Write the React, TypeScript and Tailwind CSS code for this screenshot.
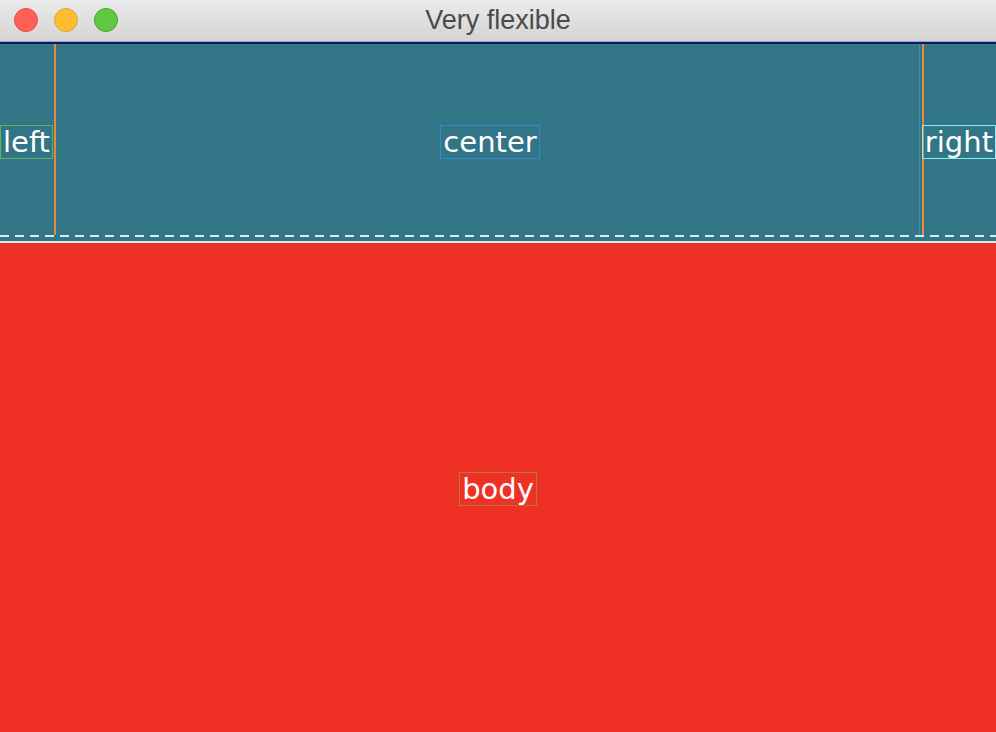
const FONT = { fontFamily: '"DejaVu Sans", sans-serif' };

function Label({ text, border }: { text: string; border: string }) {
  return (
    <span
      className={`inline-block border px-[2px] text-[29px] leading-[32px] text-white ${border}`}
      style={FONT}
    >
      {text}
    </span>
  );
}

export default function App() {
  return (
    <div className="flex h-[732px] w-[996px] flex-col overflow-hidden bg-[#ee3124]">
      {/* title bar */}
      <div className="relative flex h-[41px] items-center justify-center bg-gradient-to-b from-[#ebebeb] to-[#d4d4d4]">
        <div className="absolute left-[14px] top-[8px] flex gap-[16px]">
          <span className="h-[24px] w-[24px] rounded-full border border-[#e0524b] bg-[#ff5f57]" />
          <span className="h-[24px] w-[24px] rounded-full border border-[#dfa23a] bg-[#febc2e]" />
          <span className="h-[24px] w-[24px] rounded-full border border-[#3fa63a] bg-[#5fc83f]" />
        </div>
        <span
          className="text-[27px] text-[#4a4a4a]"
          style={{ fontFamily: '"Liberation Sans", sans-serif' }}
        >
          Very flexible
        </span>
      </div>
      <div className="h-[1px] bg-[#8fa6d8]" />
      <div className="h-[2px] bg-[#0f1a5a]" />

      {/* header */}
      <div className="flex h-[197px] flex-col bg-[#327586]">
        <div className="flex flex-1">
          <div className="flex w-[54px] items-center pt-[4px]">
            <Label text="left" border="border-[#62b35c]" />
          </div>
          <div className="w-[2px] bg-[#e6893a]" />
          <div className="flex flex-1 items-center justify-center pt-[4px] pl-[5px]">
            <Label text="center" border="border-[#3288d6]" />
          </div>
          <div className="w-[1px] bg-[#3d8fae]" />
          <div className="w-[2px]" />
          <div className="w-[2px] bg-[#e6893a]" />
          <div className="flex w-[72px] items-center justify-end pt-[4px]">
            <Label text="right" border="border-[#86eef5]" />
          </div>
        </div>
        <div className="h-[2px] bg-[repeating-linear-gradient(90deg,#dfe8ee_0px,#dfe8ee_9px,transparent_9px,transparent_15px)]" />
        <div className="h-[4px]" />
      </div>
      <div className="h-[2px] bg-[#d8f2e6]" />

      {/* body */}
      <div className="flex flex-1 items-center justify-center pt-[2px]">
        <Label text="body" border="border-[#b07a3a]" />
      </div>
    </div>
  );
}
